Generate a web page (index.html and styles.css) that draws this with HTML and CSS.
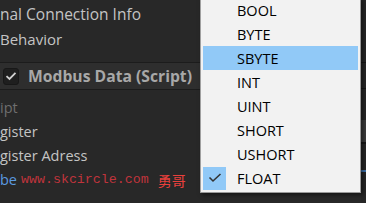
FILE: index.html
```html
<!DOCTYPE html>
<html>
<head>
<meta charset="utf-8">
<link rel="stylesheet" href="styles.css">
</head>
<body>
<div class="inspector">
  <div class="row top"><span class="wide">nal Connection Info</span></div>
  <div class="row top"><span>Behavior</span></div>
  <div class="spacer"></div>
  <div class="header">
    <span class="check"><svg width="12" height="10" viewBox="0 0 12 10"><path d="M1.5 5.2 L4.5 8 L10.5 1.8" fill="none" stroke="#d0d0d0" stroke-width="1.8"/></svg></span>
    <span class="title">Modbus Data (Script)</span>
  </div>
  <div class="row dim"><span>ipt</span></div>
  <div class="row"><span>gister</span></div>
  <div class="row"><span>gister Adress</span></div>
  <div class="row"><span class="blue">be</span><span class="wm">www.skcircle.com</span><span class="wm-cn">勇哥</span></div>
</div>
<div class="rightstrip">
  <div class="rs-line l1"></div>
  <div class="rs-line l2"></div>
  <div class="rs-box"></div>
  <div class="rs-blue"></div>
</div>
<div class="menu">
  <div class="item"><span class="mark"></span><span class="label">BOOL</span></div>
  <div class="item"><span class="mark"></span><span class="label">BYTE</span></div>
  <div class="item hover"><span class="mark"></span><span class="label">SBYTE</span></div>
  <div class="item"><span class="mark"></span><span class="label">INT</span></div>
  <div class="item"><span class="mark"></span><span class="label">UINT</span></div>
  <div class="item"><span class="mark"></span><span class="label">SHORT</span></div>
  <div class="item"><span class="mark"></span><span class="label">USHORT</span></div>
  <div class="item"><span class="mark on"><svg width="14" height="10" viewBox="0 0 14 10"><path d="M1.5 4.5 L5 8 L12.5 1" fill="none" stroke="#333" stroke-width="1.6"/></svg></span><span class="label">FLOAT</span></div>
</div>
</body>
</html>
```
FILE: styles.css
```css
html, body {
  margin: 0;
  padding: 0;
}
body {
  width: 366px;
  height: 203px;
  overflow: hidden;
  background: #282828;
  position: relative;
  font-family: "Open Sans", "Noto Sans", sans-serif;
}
.inspector {
  padding-top: 1px;
  width: 366px;
  color: #c4c4c4;
  font-size: 14.5px;
}
.row {
  height: 24px;
  line-height: 24px;
  display: flex;
  align-items: center;
  white-space: nowrap;
}
.row.top {
  height: 25px;
  font-size: 15px;
}
.wide { font-size: 15.5px; }
.dim { color: #6e6e6e; }
.blue { color: #5b9ae0; }
.spacer { height: 11px; }
.header {
  height: 26px;
  border-top: 1px solid #1c1c1c;
  border-bottom: 1px solid #1c1c1c;
  background: #2e2e2e;
  display: flex;
  align-items: center;
  gap: 9px;
  margin-bottom: 6px;
}
.check {
  width: 14px;
  height: 15px;
  margin-left: 3px;
  border-radius: 3px;
  background: #1f1f1f;
  border: 1px solid #181818;
  display: flex;
  align-items: center;
  justify-content: center;
}
.title {
  font-weight: 700;
  color: #a8a8a8;
  font-size: 15.7px;
}
.wm {
  font-family: "Liberation Mono", monospace;
  font-size: 13.3px;
  color: #c0343c;
  margin-left: 4px;
}
.wm-cn {
  font-family: "Noto Sans CJK SC", sans-serif;
  color: #e8403c;
  font-size: 14px;
  margin-left: 9px;
}
.rightstrip {
  position: absolute;
  left: 361px;
  top: 0;
  width: 5px;
  height: 203px;
  background: #262626;
}
.rs-line { position: absolute; left: 0; width: 5px; height: 1px; background: #161616; }
.l1 { top: 62px; }
.l2 { top: 88px; }
.rs-box { position: absolute; left: 0; top: 120px; width: 5px; height: 22px; background: #3c3c3c; border-bottom: 2px solid #161616; }
.rs-blue { position: absolute; left: 0; top: 170px; width: 5px; height: 2px; background: #3a6ea8; }
.menu {
  position: absolute;
  left: 200px;
  top: -2px;
  width: 155px;
  padding: 0 2px 2px 2px;
  background: #f2f2f2;
  border-left: 1px solid #a0a0a0;
  border-right: 1px solid #999;
  border-bottom: 1px solid #999;
  box-shadow: 2px 2px 4px rgba(0,0,0,0.5);
}
.item {
  height: 24px;
  display: flex;
  align-items: center;
}
.item.hover { background: #91c9f7; }
.mark {
  width: 23px;
  height: 23px;
  display: flex;
  align-items: center;
  justify-content: center;
  margin-right: 11px;
}
.mark.on { background: #91c9f7; }
.label {
  font-family: "Open Sans", sans-serif;
  font-size: 14.5px;
  color: #000;
}
```
